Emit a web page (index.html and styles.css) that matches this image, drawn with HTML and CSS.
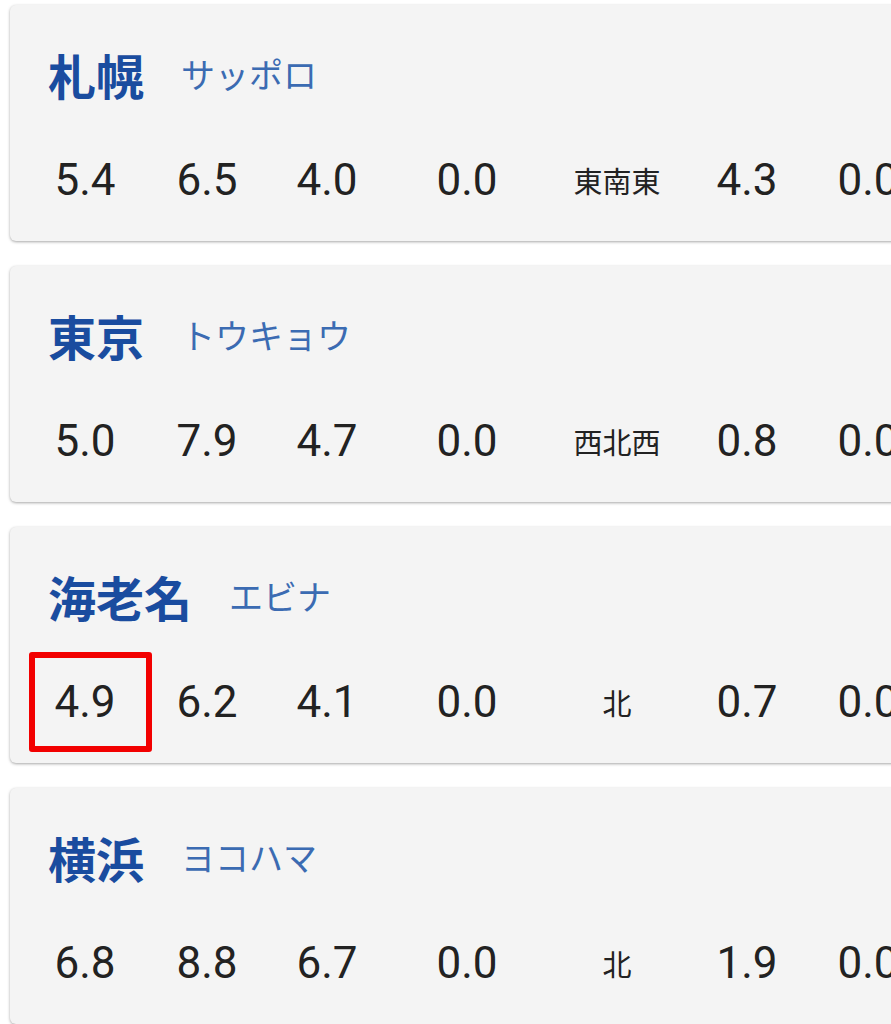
FILE: index.html
```html
<!DOCTYPE html>
<html>
<head>
    <title>Weather</title>
    <link rel="stylesheet" href="styles.css">
</head>
<body>
    <div class="container">

        <div class="station-card">
            <div class="station-head">
                <span class="station-name">札幌</span>
                <span class="station-kana">サッポロ</span>
            </div>
            <div class="station-row">
                <span class="cell">5.4</span>
                <span class="cell">6.5</span>
                <span class="cell">4.0</span>
                <span class="cell">0.0</span>
                <span class="cell wind">東南東</span>
                <span class="cell">4.3</span>
                <span class="cell">0.0</span>
            </div>
        </div>

        <div class="station-card">
            <div class="station-head">
                <span class="station-name">東京</span>
                <span class="station-kana">トウキョウ</span>
            </div>
            <div class="station-row">
                <span class="cell">5.0</span>
                <span class="cell">7.9</span>
                <span class="cell">4.7</span>
                <span class="cell">0.0</span>
                <span class="cell wind">西北西</span>
                <span class="cell">0.8</span>
                <span class="cell">0.0</span>
            </div>
        </div>

        <div class="station-card">
            <div class="station-head">
                <span class="station-name">海老名</span>
                <span class="station-kana">エビナ</span>
            </div>
            <div class="station-row">
                <span class="cell marked">4.9<i class="mark-box"></i></span>
                <span class="cell">6.2</span>
                <span class="cell">4.1</span>
                <span class="cell">0.0</span>
                <span class="cell wind">北</span>
                <span class="cell">0.7</span>
                <span class="cell">0.0</span>
            </div>
        </div>

        <div class="station-card">
            <div class="station-head">
                <span class="station-name">横浜</span>
                <span class="station-kana">ヨコハマ</span>
            </div>
            <div class="station-row">
                <span class="cell">6.8</span>
                <span class="cell">8.8</span>
                <span class="cell">6.7</span>
                <span class="cell">0.0</span>
                <span class="cell wind">北</span>
                <span class="cell">1.9</span>
                <span class="cell">0.0</span>
            </div>
        </div>

    </div>
</body>
</html>
```

FILE: styles.css
```css
html {
    overflow: hidden;
}

body {
    font-family: Roboto, "Noto Sans CJK JP", sans-serif;
    margin: 0;
    padding: 0;
    background-color: #ffffff;
}

.container {
    display: flex;
    flex-direction: column;
    gap: 25px;
    padding: 5px 0 0 10px;
    width: 960px;
}

.station-card {
    background-color: #f4f4f4;
    border-radius: 6px;
    box-shadow: 0 1px 3px rgba(0, 0, 0, 0.35);
    height: 236px;
    padding-top: 39px;
    box-sizing: border-box;
}

.station-head {
    display: flex;
    align-items: center;
    gap: 37px;
    padding-left: 38px;
    height: 60px;
    line-height: 60px;
}

.station-name {
    font-family: "Noto Sans CJK JP", sans-serif;
    font-size: 48px;
    font-weight: bold;
    color: #1a4c9f;
}

.station-kana {
    font-family: "Noto Sans CJK JP", sans-serif;
    font-size: 34px;
    color: #3b6bb2;
}

.station-row {
    display: grid;
    grid-template-columns: 120px 124px 116px 164px 136px 124px 118px;
    margin-top: 46px;
    padding-left: 15px;
    height: 60px;
    line-height: 60px;
}

.cell {
    text-align: center;
    font-size: 44px;
    color: #222222;
}

.cell.wind {
    font-family: "Noto Sans CJK JP", sans-serif;
    font-size: 29px;
}

.cell.marked {
    position: relative;
}

/* red highlight drawn over the first value */
.mark-box {
    position: absolute;
    left: 4px;
    top: -20px;
    width: 123px;
    height: 100px;
    box-sizing: border-box;
    border: 6px solid #f20000;
    border-radius: 3px;
}
```
